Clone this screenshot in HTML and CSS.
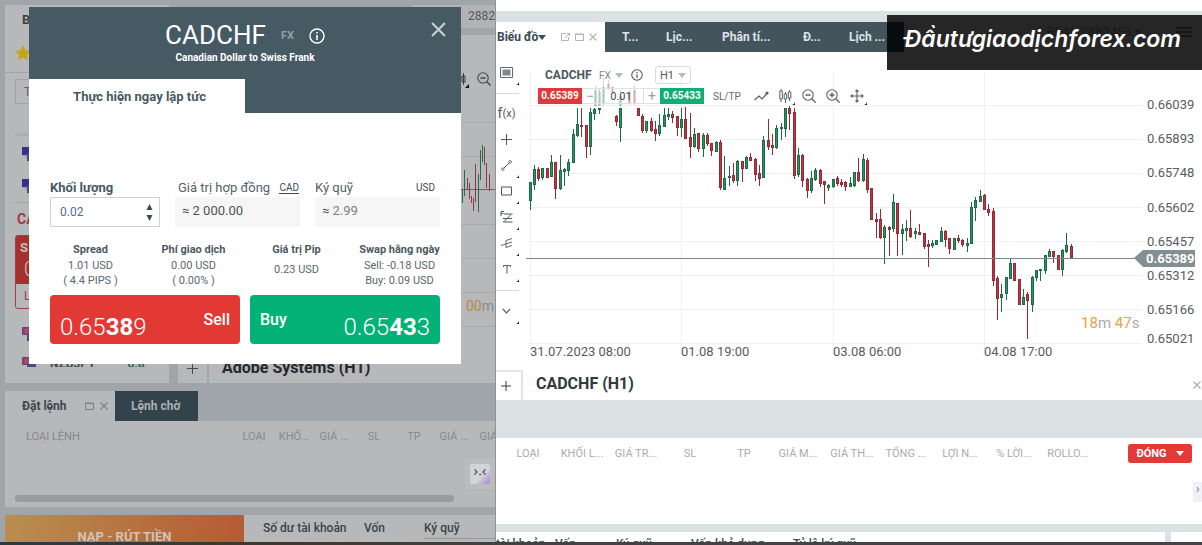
FILE: index.html
```html
<!DOCTYPE html>
<html lang="vi">
<head>
<meta charset="utf-8">
<title>CADCHF</title>
<link rel="stylesheet" href="styles.css">
</head>
<body>
<svg class="defs" aria-hidden="true">
  <symbol id="i-info" viewBox="0 0 16 16"><circle cx="8" cy="8" r="7" fill="none" stroke="currentColor" stroke-width="1.4"/><path d="M8 7v5M8 4v1.6" stroke="currentColor" stroke-width="1.6"/></symbol>
  <symbol id="i-close" viewBox="0 0 14 14"><path d="M1 1l12 12M13 1L1 13" fill="none" stroke="currentColor" stroke-width="2"/></symbol>
  <symbol id="i-x" viewBox="0 0 8 8"><path d="M.5.5l7 7M7.500.5l-7 7" fill="none" stroke="currentColor" stroke-width="1.2"/></symbol>
  <symbol id="i-win" viewBox="0 0 9 8"><path d="M.5 1h8v6.500h-8zM.5 1.500h8" fill="none" stroke="currentColor"/></symbol>
  <symbol id="i-plus" viewBox="0 0 11 11"><path d="M5.500 0v11M0 5.500h11" stroke="currentColor" stroke-width="1"/></symbol>
  <symbol id="i-zout" viewBox="0 0 14 14"><circle cx="6" cy="6" r="5.200" fill="none" stroke="currentColor" stroke-width="1.100"/><path d="M3.500 6h5M9.800 9.800L13.600 13.600" stroke="currentColor" stroke-width="1.300"/></symbol>
  <symbol id="i-zin" viewBox="0 0 14 14"><circle cx="6" cy="6" r="5.200" fill="none" stroke="currentColor" stroke-width="1.100"/><path d="M3.500 6h5M6 3.500v5M9.800 9.800L13.600 13.600" stroke="currentColor" stroke-width="1.300"/></symbol>
  <symbol id="i-flag" viewBox="0 0 14 14"><path d="M0 0h9v8H0z" fill="#33338a"/><path d="M5 6h9v8H5z" fill="#4a4a86"/><path d="M0 8l5 0v4z" fill="#a4a6ad"/></symbol>
  <symbol id="i-flag2" viewBox="0 0 14 14"><path d="M0 0h9v8H0z" fill="#5b3c79"/><path d="M0 0l9 8M9 0L0 8M4.500 0v8M0 4h9" stroke="#a8506a" stroke-width="1.200"/><path d="M5 7h9v7H5z" fill="#4a4a86"/></symbol>
</svg>

<div class="app">
  <main class="panes">
    <section class="pane dim">
      <div class="upper">
        <div class="watch">
          <div class="watch-list">
            <h2 class="watch-title">Bảng giá</h2>
            <div class="watch-fav"><svg width="16" height="16" viewBox="0 0 16 16"><path d="M8 0l2.400 5.300 5.600.6-4.200 3.900 1.200 5.700L8 12.600l-5 2.900 1.200-5.700L0 5.900l5.600-.6z" fill="#c5a517"/></svg></div>
            <input class="watch-search" type="text" value="Tìm kiếm" aria-label="Tìm kiếm">
            <div class="watch-band"></div>
            <div class="watch-row"><svg width="14" height="14"><use href="#i-flag"/></svg></div>
            <div class="watch-row line"><svg width="14" height="14"><use href="#i-flag"/></svg></div>
            <h3 class="watch-pair">CADCHF</h3>
            <div class="watch-deal"><div class="deal-top"><span>S</span><b>0</b></div><div class="deal-low">L</div></div>
            <div class="watch-row"><svg width="14" height="14"><use href="#i-flag2"/></svg></div>
            <div class="watch-row"><svg width="14" height="14"><use href="#i-flag2"/></svg><span>NZDJPY</span><i class="g">0.8</i><i>0.8</i></div>
          </div>
        </div>
        <div class="side">
          <div class="side-top">2882</div>
          <div class="side-chart">
            <svg class="mini" viewBox="461 35 35 323">
              <path d="M461 122.500h35M461 156.500h35M461 224.500h35M461 258.500h35M461 292.500h35M461 326.500h35" stroke="#a9abad"/>
              <path d="M461 189.500h35" stroke="#5f6569"/>
              <path d="M461.500 187v25M463.500 190v13M465.500 170v26M479.500 174v38M481.500 150v30M483.500 145v17" stroke="#2c6a50"/>
              <path d="M468.500 178v12M470.500 183v16M472.500 196v7M474.500 198v13M476.500 164v38M485.500 147v18M487.500 163v25M490.500 174v17" stroke="#8c3a45"/>
              <path d="M461 76v6M464.500 73v12M463 76h3v6h-3z" stroke="#3b4043" fill="none"/>
              <path d="M470 84v4h-4z" fill="#111"/>
              <svg x="478" y="72" width="14" height="14" color="#45494d"><use href="#i-zout"/></svg>
              <text x="467" y="311" font-size="14" fill="#b98a3e">00<tspan fill="#888b8d">m</tspan></text>
            </svg>
          </div>
          <div class="side-tabs"><button class="plus" aria-label="Thêm"><svg width="11" height="11"><use href="#i-plus"/></svg></button><h2>Adobe Systems (H1)</h2></div>
        </div>
      </div>

      <div class="orders">
        <div class="order-tabs">
          <button class="otab active">Đặt lệnh <svg width="9" height="8"><use href="#i-win"/></svg><svg width="8" height="8"><use href="#i-x"/></svg></button>
          <button class="otab">Lệnh chờ</button>
        </div>
        <div class="order-body">
          <table class="order-table"><thead><tr><th class="first">LOẠI LỆNH</th><th>LOẠI</th><th>KHỐ...</th><th>GIÁ ...</th><th>SL</th><th>TP</th><th>GIÁ ...</th><th>GIÁ ...</th></tr></thead></table>
          <div class="chat"><svg width="20" height="20" viewBox="0 0 20 20"><defs><linearGradient id="cg" x1="0" y1="0" x2="1" y2="1"><stop offset=".6" stop-color="#d2d3db"/><stop offset="1" stop-color="#a685d0"/></linearGradient></defs><rect width="20" height="20" rx="2" fill="url(#cg)"/><path d="M4.500 5.500l2.500 2.500-2.500 2.500M9 10.500h2.500M15.500 5.500L13 8l2.500 2.500" fill="none" stroke="#4f5058" stroke-width="1.200"/></svg></div>
          <div class="scroll"></div>
        </div>
      </div>

      <div class="account">
        <button class="fund">NẠP - RÚT TIỀN</button>
        <div class="sums"><span class="s1">Số dư tài khoản</span><span class="s2">Vốn</span><span class="s3">Ký quỹ</span></div>
      </div>

      <form class="ticket">
        <header class="ticket-head">
          <div class="ticket-title"><h1>CADCHF</h1><span>FX</span><svg width="16" height="16"><use href="#i-info"/></svg></div>
          <p>Canadian Dollar to Swiss Frank</p>
          <button type="button" class="ticket-close" aria-label="Đóng"><svg width="15" height="15"><use href="#i-close"/></svg></button>
          <button type="button" class="ticket-tab">Thực hiện ngay lập tức</button>
        </header>
        <div class="ticket-body">
          <div class="fields">
            <div class="field"><div class="field-head"><label for="vol" class="strong">Khối lượng</label></div>
              <div class="box edit"><input id="vol" type="text" inputmode="decimal" value="0.02"><span class="spin"><button type="button" aria-label="Tăng"><svg width="7" height="6" viewBox="0 0 7 6"><path d="M3.500 0L6.500 6h-6z" fill="#3c4a52"/></svg></button><button type="button" aria-label="Giảm"><svg width="7" height="6" viewBox="0 0 7 6"><path d="M3.500 6L6.500 0h-6z" fill="#3c4a52"/></svg></button></span></div></div>
            <div class="field"><div class="field-head in"><span>Giá trị hợp đồng</span><a href="#cad">CAD</a></div><output class="box">≈ 2 000.00</output></div>
            <div class="field"><div class="field-head usd"><span>Ký quỹ</span><small>USD</small></div><output class="box">≈ <em>2.99</em></output></div>
          </div>
          <dl class="stats">
            <div><dt>Spread</dt><dd>1.01 USD</dd><dd>( 4.4 PIPS )</dd></div>
            <div><dt>Phí giao dịch</dt><dd>0.00 USD</dd><dd>( 0.00% )</dd></div>
            <div class="mid"><dt>Giá trị Pip</dt><dd>0.23 USD</dd></div>
            <div><dt>Swap hằng ngày</dt><dd>Sell: -0.18 USD</dd><dd>Buy: 0.09 USD</dd></div>
          </dl>
          <div class="deals">
            <button type="button" class="deal sell"><span class="price">0.65<b>38</b>9</span><span>Sell</span></button>
            <button type="button" class="deal buy"><span>Buy</span><span class="price">0.65<b>43</b>3</span></button>
          </div>
        </div>
      </form>
    </section>

    <section class="pane live">
      <div class="top-strip"></div>
      <nav class="tabs">
        <button class="tab active">Biểu đồ<i class="caret"></i>
          <svg class="pop" width="9" height="8" viewBox="0 0 9 8"><path d="M5 .5H.5v7h7V4M4 5L8.500.5M6 .5h2.500V3" fill="none" stroke="currentColor"/></svg><svg width="9" height="8"><use href="#i-win"/></svg><svg width="8" height="8"><use href="#i-x"/></svg></button>
        <div class="tab-list"><button class="tab t1">T...</button><button class="tab t2">Lịc...</button><button class="tab t3">Phân tí...</button><button class="tab t4">Đ...</button><button class="tab t5">Lịch ...</button></div>
      </nav>
      <div class="work">
        <div class="tools">
          <button class="tool big corner" aria-label="Mẫu"><svg width="13" height="12" viewBox="0 0 13 12"><path d="M.5.5h12v10H.5z" fill="none" stroke="#5d6a71"/><path d="M2.500 2.500h8v6h-8z" fill="#7d898f"/></svg></button>
          <button class="tool fx">f<small>(x)</small></button>
          <button class="tool" aria-label="Chữ thập"><svg width="11" height="11"><use href="#i-plus"/></svg></button>
          <button class="tool corner" aria-label="Đường xu hướng"><svg width="11" height="11" viewBox="0 0 11 11"><path d="M2.500 8.500l6-6" stroke="currentColor"/><circle cx="1.800" cy="9.200" r="1.300" fill="none" stroke="currentColor" stroke-width=".8"/><circle cx="9.200" cy="1.800" r="1.300" fill="none" stroke="currentColor" stroke-width=".8"/></svg></button>
          <button class="tool corner" aria-label="Hình chữ nhật"><svg width="11" height="10" viewBox="0 0 11 10"><path d="M.5 1h10v8H.5z" fill="none" stroke="currentColor"/></svg></button>
          <button class="tool corner" aria-label="Fibonacci"><svg width="13" height="12" viewBox="0 0 13 12"><path d="M4 3h8.500M3 7.500h9M3 11h9.500M11 3.500L4 10.500M1 5V.5h3M1 2.500h2.500" fill="none" stroke="currentColor"/></svg></button>
          <button class="tool corner" aria-label="Pitchfork"><svg width="12" height="10" viewBox="0 0 12 10"><path d="M0 7.500l11-3.500M5 2.500l6-2M5 9.500l6-2M5 2.500v7" fill="none" stroke="currentColor" stroke-width=".9"/></svg></button>
          <button class="tool corner" aria-label="Văn bản"><svg width="8" height="9" viewBox="0 0 8 9"><path d="M.5 2V.6h7V2M4 .6V8.500" fill="none" stroke="currentColor"/></svg></button>
          <button class="tool last corner" aria-label="Thêm công cụ"><svg width="9" height="6" viewBox="0 0 9 6"><path d="M.8.8l3.700 4 3.700-4" fill="none" stroke="currentColor" stroke-width="1.200"/></svg></button>
        </div>
        <div class="chart">
          <svg class="plot" viewBox="524 52 678 318">
            <path d="M530.500 72v281M681.500 72v281M833.500 72v281M984.500 72v281M528 105.500h614M528 139.500h614M528 173.500h614M528 207.500h614M528 241.500h614M528 275.500h614M528 309.500h614M528 343.500h614" stroke="#eef0f1" fill="none"/>
            <g id="candles"></g>
            <path d="M526 258.500h612" stroke="#7b878b"/>
            <path d="M1134 258l9-8h52v17h-52z" fill="#84908f"/>
            <g class="axis">
              <text x="1147" y="109">0.66039</text><text x="1147" y="143">0.65893</text><text x="1147" y="177">0.65748</text><text x="1147" y="212">0.65602</text><text x="1147" y="246">0.65457</text><text x="1147" y="280">0.65312</text><text x="1147" y="314">0.65166</text><text x="1147" y="343">0.65021</text>
              <text class="now" x="1146" y="263">0.65389</text>
              <text x="530" y="356">31.07.2023 08:00</text><text x="681" y="356">01.08 19:00</text><text x="833" y="356">03.08 06:00</text><text x="984" y="356">04.08 17:00</text>
            </g>
            <text class="timer" x="1081" y="328">18<tspan>m</tspan> 47<tspan>s</tspan></text>
          </svg>
          <div class="chart-bar">
            <div class="bar-row one"><b>CADCHF</b><span class="fxs">FX</span><i class="caret grey"></i><svg width="12" height="12"><use href="#i-info"/></svg><span class="h1"><select aria-label="Khung thời gian"><option>H1</option></select><i class="caret grey"></i></span></div>
            <div class="bar-row two">
              <button class="badge red">0.65389</button>
              <span class="qty"><button aria-label="Giảm">−</button><input type="text" value="0.01" aria-label="Khối lượng"><button aria-label="Tăng">+</button></span>
              <button class="badge green">0.65433</button>
              <span class="sltp">SL/TP</span>
              <div class="icons">
                <button aria-label="Đường"><svg width="15" height="14" viewBox="0 0 15 14"><path d="M.5 11l4.500-4 3 3 5.500-6" fill="none" stroke="currentColor" stroke-width="1.200"/><circle cx="13" cy="4" r="1.600" fill="currentColor"/></svg></button>
                <button class="corner" aria-label="Nến"><svg width="13" height="14" viewBox="0 0 13 14"><path d="M2 0v2M2 10v3M6.500 3v2M6.500 10v4M10.500 1v2M10.500 9v3M.8 2h2.500v8H.8zM5.200 5h2.500v5H5.200zM9.300 3h2.500v6H9.300z" fill="none" stroke="currentColor"/></svg></button>
                <button aria-label="Thu nhỏ"><svg width="14" height="14"><use href="#i-zout"/></svg></button>
                <button aria-label="Phóng to"><svg width="14" height="14"><use href="#i-zin"/></svg></button>
                <button class="corner" aria-label="Di chuyển"><svg width="14" height="14" viewBox="0 0 14 14"><path d="M7 1v12M1 7h12M5.500 2.500L7 1l1.500 1.500M5.500 11.500L7 13l1.500-1.500M2.500 5.500L1 7l1.500 1.500M11.500 5.500L13 7l-1.500 1.500" fill="none" stroke="currentColor" stroke-width="1.100"/></svg></button>
              </div>
            </div>
          </div>
        </div>
      </div>
      <div class="chart-tabs"><button class="plus" aria-label="Thêm"><svg width="10" height="10"><use href="#i-plus"/></svg></button><h2>CADCHF (H1)</h2><button class="shut" aria-label="Đóng"><svg width="8" height="8"><use href="#i-x"/></svg></button></div>
      <div class="divider"></div>
      <div class="positions">
        <table><thead><tr><th>LOẠI</th><th>KHỐI L...</th><th>GIÁ TR...</th><th>SL</th><th>TP</th><th>GIÁ M...</th><th>GIÁ TH...</th><th>TỔNG ...</th><th>LỢI N...</th><th>% LỜI...</th><th>ROLLO...</th></tr></thead></table>
        <button class="close-all">ĐÓNG<i class="caret white"></i></button>
        <div class="chat-edge">›</div>
      </div>
      <div class="summary"><span class="m1">tài khoản</span><span class="m2">Vốn</span><span class="m3">Ký quỹ</span><span class="m4">Vốn khả dụng</span><span class="m5">Tỷ lệ ký quỹ</span></div>
      <div class="mark"><i class="shade"></i><span class="under">REAL 2882453 ▾</span><svg class="menu" width="16" height="10" viewBox="0 0 16 10"><path d="M0 1h16M0 5h16M0 9h16" stroke="#080808"/></svg><strong>Đầutưgiaodịchforex.com</strong></div>
    </section>
  </main>
  <div class="foot"></div>
</div>
<script src="chart.js"></script>
</body>
</html>
```
FILE: styles.css
```css
* { box-sizing: border-box; }
body { margin: 0; font-family: Roboto, "Noto Sans", sans-serif; font-size: 12px; color: #3f4d55; background: #fff; }
h1, h2, h3, p, dl, dd { margin: 0; }
button, input, select { font: inherit; color: inherit; border: 0; background: none; padding: 0; margin: 0; }
i { font-style: normal; }
svg { display: block; flex: none; }
.defs { position: absolute; width: 0; height: 0; }
.app { height: 100vh; display: grid; grid-template-rows: minmax(0, 1fr) 3px; overflow: hidden; }
.foot { background: linear-gradient(90deg, #2b3a42, #43382f 25%, #444244 45%, #464346); }
.panes { display: grid; grid-template-columns: minmax(0, 496fr) minmax(0, 706fr); overflow: hidden; }
.pane { position: relative; overflow: hidden; display: flex; flex-direction: column; }
.caret { display: inline-block; border: 4px solid transparent; border-top: 5px solid #3f4d55; border-bottom: 0; }
.caret.grey { border-top-color: #b5babd; }
.caret.white { border-top-color: #fff; }

/* dimmed workspace */
.dim { background: #9fa5a9; padding: 5px 0 0 5px; gap: 8px; border-right: 1px solid #8f9396; }
.upper { display: grid; grid-template-columns: 164px minmax(0, 1fr); grid-template-rows: minmax(0, 1fr); gap: 9px; height: 378px; flex: none; }
.watch { background: #b7b8b9; padding-bottom: 16px; overflow: hidden; }
.watch-list { height: 100%; overflow: hidden; }
.watch-title { font-size: 13px; line-height: 29px; height: 31px; padding-left: 17px; color: #37434a; }
.watch-fav { height: 37px; padding: 9px 10px; border-bottom: 1px solid #a3a6a8; }
.watch-search { display: block; width: 144px; height: 25px; margin: 6px 10px 29px; padding-left: 8px; border: 1px solid #a0a3a6; color: #5d6366; }
.watch-band { height: 3px; margin: 0 10px; background: #acaeb1; }
.watch-row { display: flex; align-items: center; gap: 14px; height: 30px; padding-left: 17px; margin-top: 3px; font-weight: 700; }
.watch-row + .watch-row { margin-top: 0; }
.watch-row.line { height: 34px; border-bottom: 1px solid #a3a6a8; margin: 0 10px; padding-left: 7px; }
.watch-row i { margin-left: 12px; }
.watch-row .g { color: #2c6a50; margin-left: 18px; }
.watch-pair { color: #a93a3f; font-size: 14px; line-height: 32px; padding-left: 12px; }
.watch-deal { height: 74px; margin: 0 10px 10px; border: 1px solid #a93a3f; border-radius: 3px; }
.deal-top { height: 48px; background: #a5312f; color: #c9bdbd; display: flex; flex-direction: column; padding: 3px 4px; font-weight: 700; font-size: 13px; line-height: 18px; }
.deal-top b { font-weight: 300; font-size: 20px; line-height: 24px; padding-left: 4px; }
.deal-low { color: #a93a3f; line-height: 24px; padding-left: 8px; }
.side { display: flex; flex-direction: column; }
.side-top { height: 23px; margin-bottom: 7px; line-height: 23px; width: 83px; padding-left: 56px; margin-left: auto; background: #b1b3b5; overflow: hidden; color: #55595c; }
.side-chart { flex: 1; background: #b7b8b9; overflow: hidden; }
.mini { width: 35px; height: 323px; margin-left: auto; }
.side-tabs { height: 25px; display: flex; background: #b7b8b9; flex: none; }
.side-tabs .plus { width: 31px; border-right: 2px solid #a3a8ab; padding: 0 0 4px 9px; }
.side-tabs h2 { font-size: 16px; line-height: 20px; padding-left: 13px; color: #23292d; }
.orders { flex: none; }
.order-tabs { display: flex; height: 30px; }
.otab { display: flex; align-items: center; font-weight: 700; font-size: 12px; background: #33434b; color: #a9afb2; width: 83px; padding: 0 0 0 16px; white-space: nowrap; }
.otab.active { width: 110px; padding: 0 0 0 17px; background: #b7b8b9; color: #3b484f; }
.otab svg { color: #7d8285; margin-left: 6px; }
.otab svg:first-of-type { margin-left: 18px; }
.order-body { position: relative; height: 86px; background: #b7b8b9; overflow: hidden; display: flex; flex-direction: column; justify-content: space-between; padding-bottom: 5px; }
.order-table { border-spacing: 0; table-layout: fixed; width: 510px; }
th { font-weight: 400; font-size: 11px; padding: 0 2px 0 0; height: 30px; width: 40px; text-align: center; white-space: nowrap; color: #85898b; }
th.first { width: 230px; text-align: left; padding-left: 21px; }
.scroll { height: 7px; margin: 0 41px 0 10px; border-radius: 3px; background: #989d9f; }
.chat { position: absolute; right: 0; bottom: 18px; padding: 5px; border-radius: 3px; background: #bbbcbe; }
.account { display: grid; grid-template-columns: 239px minmax(0, 1fr); flex: 1; overflow: hidden; }
.fund { background: linear-gradient(100deg, #b98f50, #b7683a 70%, #b65a35); color: #d3c3b8; font-weight: 700; font-size: 13px; line-height: 18px; height: 44px; }
.sums { background: #b7b8b9; display: flex; line-height: 27px; padding-left: 19px; font-weight: 500; font-size: 12px; color: #3b4348; white-space: nowrap; }
.s1 { width: 101px; } .s2 { width: 60px; } .s3 { flex: 1; height: 24px; border-bottom: 1px solid #94999c; }

/* order ticket */
.ticket { position: absolute; left: 29px; top: 7px; width: 432px; background: #fff; padding-bottom: 20px; }
.ticket-head { position: relative; background: #465a64; color: #fff; text-align: center; padding-top: 13px; }
.ticket-title { display: flex; justify-content: center; align-items: center; gap: 15px; height: 31px; }
.ticket-title h1 { font-weight: 400; font-size: 26px; line-height: 31px; }
.ticket-title span { font-weight: 700; font-size: 11px; color: #93a0a7; }
.ticket-head p { font-size: 10px; line-height: 14px; font-weight: 700; }
.ticket-close { position: absolute; right: 15px; top: 15px; color: #c8ced1; }
.ticket-tab { display: block; width: 216px; height: 34px; margin-top: 14px; padding-left: 5px; background: #fff; color: #465a64; font-weight: 700; font-size: 13px; }
.ticket-body { padding: 65px 21px 0; }
.fields { display: grid; grid-template-columns: 110px 125px 125px; justify-content: space-between; }
.field-head { display: flex; justify-content: space-between; align-items: center; height: 19px; line-height: 19px; margin-bottom: 0; font-size: 13px; color: #55616a; white-space: nowrap; }
.field-head .strong { font-weight: 700; font-size: 13px; color: #465a64; }
.field-head.in { padding: 0 1px 0 3px; }
.field-head.usd { padding-right: 5px; }
.field-head small, .field-head a { font-size: 10px; line-height: 11px; color: #3c4a52; text-decoration: none; }
.field-head a { border-bottom: 1px solid #3c4a52; }
.box { display: block; height: 30px; line-height: 28px; padding-left: 7px; background: #f6f6f6; font-size: 13px; color: #4c5358; }
.box em { font-style: normal; color: #7a8083; }
.box.edit { display: flex; background: #fff; border: 1px solid #ccd1d4; padding: 0 6px 0 9px; font-size: 12px; }
.box.edit input { flex: 1; min-width: 0; color: #56699a; }
.spin { display: flex; flex-direction: column; justify-content: space-between; padding: 6px 0 5px; }
.spin button { height: 6px; }
.stats { display: grid; grid-template-columns: repeat(4, 103px); margin: 14px -10px 0; justify-content: center; text-align: center; font-size: 11px; white-space: nowrap; height: 48px; }
.stats dt { font-weight: 700; line-height: 17px; color: #4a5a63; }
.stats dd { line-height: 15px; color: #5b676e; }
.stats .mid dd { padding-top: 4px; }
.deals { display: grid; grid-template-columns: 1fr 1fr; gap: 10px; margin-top: 6px; }
.deal { display: flex; justify-content: space-between; align-items: center; height: 49px; padding: 0 10px; border-radius: 4px; color: #fff; font-size: 16px; font-weight: 500; background: #e33935; }
.deal.buy { background: #04b277; }
.price { font-weight: 300; font-size: 24px; line-height: 28px; padding-top: 14px; }
.price b { font-weight: 700; }

/* live workspace */
.live { background: #fff; }
.top-strip { height: 22px; flex: none; border-bottom: 11px solid #dce2e4; }
.tabs { display: flex; height: 30px; flex: none; }
.tab { font-weight: 700; font-size: 12px; white-space: nowrap; color: #dfe3e5; text-align: left; }
.tab.active { display: flex; align-items: center; width: 109px; color: #3b484f; padding-left: 1px; }
.tab.active svg { color: #b0b5b8; margin-left: 5px; }
.tab.active .pop { margin-left: 15px; }
.tab-list { display: flex; background: #43545d; width: 299px; padding-left: 17px; }
.t1 { width: 44px; } .t2 { width: 56px; } .t3 { width: 81px; } .t4 { width: 46px; }
.work { display: grid; grid-template-columns: 28px minmax(0, 1fr); flex: none; }
.tools { padding-top: 8px; }
.tool { position: relative; display: flex; align-items: center; justify-content: center; width: 23px; height: 26px; color: #4b5860; padding-right: 2px; }
.tool.big { height: 34px; padding-bottom: 8px; margin-bottom: 6px; border-bottom: 1px solid #d5d9db; }
.tool.fx { font-size: 14px; }
.tool.fx small { font-size: 11px; }
.tool.last { height: 34px; margin-top: 8px; border-top: 1px solid #d5d9db; padding-top: 6px; }
.corner::after { content: ""; position: absolute; right: 0; bottom: 0; border: 1px solid transparent; border-width: 2px 1px 1px 2px; border-right-color: #111; border-bottom-color: #111; }
.tool.big::after { bottom: 8px; }
.chart { position: relative; }
.plot { width: 100%; height: auto; }
.axis text { font-size: 13px; fill: #565c60; }
.axis .now { fill: #fff; font-weight: 700; }
.timer { font-size: 15px; fill: #eca23a; }
.timer tspan { fill: #a9aeb1; }
.wick { stroke-width: 1; }
.up { stroke: #1d6a48; fill: #2a9366; }
.down { stroke: #932a34; fill: #b83a40; }
.faint { opacity: .22; }
.chart-bar { position: absolute; left: 14px; top: 14px; display: flex; flex-direction: column; gap: 4px; }
.bar-row { display: flex; align-items: center; }
.one { height: 18px; padding-left: 7px; color: #4b5860; }
.one b { width: 54px; font-size: 12px; }
.one .fxs { font-size: 10px; color: #7f8a90; width: 16px; }
.one svg { margin-left: 8px; }
.h1 { display: flex; align-items: center; width: 36px; height: 18px; border: 1px solid #d9dcde; border-radius: 3px; margin-left: 12px; padding: 0 4px; justify-content: space-between; font-size: 11px; }
.h1 select { appearance: none; width: 16px; }
.two { height: 16px; }
.badge { width: 44px; height: 16px; color: #fff; font-weight: 700; font-size: 10px; line-height: 16px; white-space: nowrap; }
.red { background: #e0393a; } .green { background: #0fae74; }
.qty { display: flex; width: 78px; height: 16px; border: 1px solid #dfe2e3; border-width: 1px 0; }
.qty button { width: 16px; line-height: 14px; color: #9aa1a5; font-size: 14px; }
.qty input { width: 46px; text-align: center; font-size: 11px; border: 1px solid #dfe2e3; border-width: 0 1px; }
.sltp { width: 50px; padding-left: 9px; font-size: 10px; color: #5d686e; }
.icons { display: flex; gap: 10px; color: #56626a; }
.icons button { position: relative; }
.icons .corner::after { right: -3px; bottom: -2px; }
.chart-tabs { display: flex; height: 30px; flex: none; align-items: center; }
.chart-tabs .plus { width: 27px; height: 30px; border: solid #e1e5e6; border-width: 2px 2px 0 0; padding-left: 5px; color: #1f2933; }
.chart-tabs h2 { flex: 1; font-size: 16px; padding-left: 13px; line-height: 28px; height: 30px; color: #303a40; }
.shut { width: 9px; color: #a8adb0; overflow: hidden; }
.divider { height: 38px; flex: none; background: #dce2e4; }
.positions { position: relative; height: 86px; flex: none; display: flex; align-items: flex-start; justify-content: space-between; padding: 0 10px 0 6px; }
.positions table { border-spacing: 0; table-layout: fixed; width: 594px; }
.positions th { width: 54px; color: #a7acaf; }
.close-all { display: flex; align-items: center; justify-content: center; gap: 9px; width: 64px; height: 19px; margin-top: 6px; border-radius: 3px; background: #e13a37; color: #fff; font-weight: 700; font-size: 11px; }
.chat-edge { position: absolute; right: 0; top: 44px; width: 9px; height: 20px; padding-left: 3px; line-height: 14px; background: #eff1f7; color: #6c7480; overflow: hidden; }
.summary { display: flex; flex: 1; overflow: hidden; border-top: 8px solid #dce2e4; line-height: 24px; font-size: 12px; font-weight: 500; white-space: nowrap; }
.m1 { width: 59px; } .m2 { width: 61px; } .m3 { width: 75px; } .m4 { width: 102px; }
.m5 { width: 378px; border-right: 6px solid #dce2e4; }
.mark { position: absolute; right: 0; top: 15px; width: 315px; height: 55px; background: #262626; color: #fff; display: flex; align-items: center; padding: 0 0 7px 17px; }
.mark strong { position: relative; font: italic 600 23px/30px Inter, "Open Sans", sans-serif; white-space: nowrap; }
.shade { position: absolute; left: 0; top: 7px; width: 17px; height: 30px; background: #090c0e; }
.under { position: absolute; right: 60px; top: 9px; color: #1a1a1a; font-size: 13px; }
.menu { position: absolute; right: 10px; top: 12px; }
```
FILE: chart.js
```js
// One candle per entry: x, direction (g up / r down), high, body top, body bottom, low
const candles = `530 g 182 182 201 210|534 g 165 169 185 190|538 r 167 169 179 181|542 g 168 168 178 180|547 r 168 168 178 178|551 g 155 162 177 177|555 r 162 162 189 199|560 g 155 170 189 190|564 g 168 169 172 186|568 g 159 162 171 176|573 g 129 134 163 163|577 g 108 124 136 137|581 r 108 125 127 137|586 r 125 125 147 158|590 g 108 112 147 155|594 g 108 109 114 120|599 g 108 108 110 114|616 r 115 116 122 126|620 g 108 108 128 142|638 r 108 108 116 116|642 r 114 116 131 133|646 g 121 121 131 133|651 r 118 121 131 132|655 r 121 129 134 141|659 g 114 125 134 136|664 g 108 115 127 127|668 g 108 114 117 120|672 r 111 114 118 123|677 r 116 116 128 136|681 g 108 119 128 137|685 r 107 119 139 139|690 r 113 137 147 158|694 g 128 134 147 148|698 r 133 133 149 152|703 g 133 135 149 157|707 r 133 135 144 146|711 r 143 143 151 156|716 g 141 142 152 152|720 r 140 142 188 190|724 g 156 178 190 190|729 g 166 176 178 186|733 r 163 175 181 183|737 g 160 161 181 186|742 r 161 161 169 182|746 g 156 157 169 169|750 r 153 157 161 161|755 r 158 159 175 181|759 r 165 173 179 186|763 g 136 140 178 178|768 r 119 140 147 150|772 r 134 145 148 155|776 g 125 128 148 149|781 g 123 127 129 140|785 g 108 108 129 137|789 r 106 108 114 130|794 r 108 112 176 179|798 g 148 155 175 177|802 r 154 155 181 187|807 r 178 179 191 198|811 g 171 178 191 193|815 g 168 170 180 181|820 r 169 170 184 187|824 r 181 181 185 204|828 g 184 185 188 191|833 g 179 179 187 188|837 r 176 178 184 186|841 r 179 182 185 187|845 r 181 182 187 191|850 g 177 183 187 187|854 g 172 172 186 187|858 r 158 172 181 182|863 g 154 159 181 182|867 r 158 160 190 193|871 r 188 188 220 220|876 r 213 219 222 238|880 r 209 219 238 239|884 g 225 227 238 264|889 r 226 227 230 256|893 g 194 202 229 232|897 r 203 203 234 256|902 g 224 229 234 255|906 g 220 228 231 241|910 r 210 228 237 238|915 g 228 231 234 239|919 r 224 232 235 235|924 r 233 233 247 249|928 r 240 244 247 267|932 g 240 243 246 248|936 g 240 240 245 245|941 g 227 231 242 242|945 r 230 231 240 247|949 r 238 238 249 254|954 g 238 238 250 250|958 r 235 238 241 243|962 r 239 240 245 247|967 g 238 243 246 252|971 g 202 207 244 244|975 g 197 200 208 221|980 g 190 196 202 202|984 r 194 195 210 210|988 r 204 209 213 216|993 r 208 211 281 286|997 r 276 278 299 320|1001 g 284 294 298 312|1006 g 277 277 294 300|1010 g 259 263 279 279|1014 r 263 263 281 281|1019 r 279 279 305 305|1023 g 289 297 305 305|1027 r 292 294 301 339|1032 g 276 277 305 312|1036 g 270 270 278 281|1040 g 269 269 271 281|1045 g 255 255 271 274|1049 g 249 251 257 257|1053 r 251 251 257 263|1058 r 255 255 270 270|1062 g 249 250 270 276|1066 g 233 245 252 253|1071 r 244 246 258 258`;
const faint = `595 g 86 90 106 106|599 g 88 92 106 106|603 g 78 87 104 106|608 r 80 84 88 90|612 r 86 87 92 94|620 g 90 96 106 107|629 r 90 92 104 105|634 r 85 90 104 105`;

const draw = (rows, extra) => rows.split("|").map(row => {
  const [x, dir, high, top, bottom, low] = row.split(" ");
  const cls = (dir === "g" ? "up" : "down") + extra;
  const mid = +x + 0.5;
  return `<path class="wick ${cls}" d="M${mid} ${high}V${low}"/>` +
    `<rect class="${cls}" x="${x - 0.5}" y="${+top + 0.5}" width="2" height="${Math.max(1, bottom - top - 1)}"/>`;
}).join("");

document.getElementById("candles").innerHTML = draw(candles, "") + draw(faint, " faint");
```
